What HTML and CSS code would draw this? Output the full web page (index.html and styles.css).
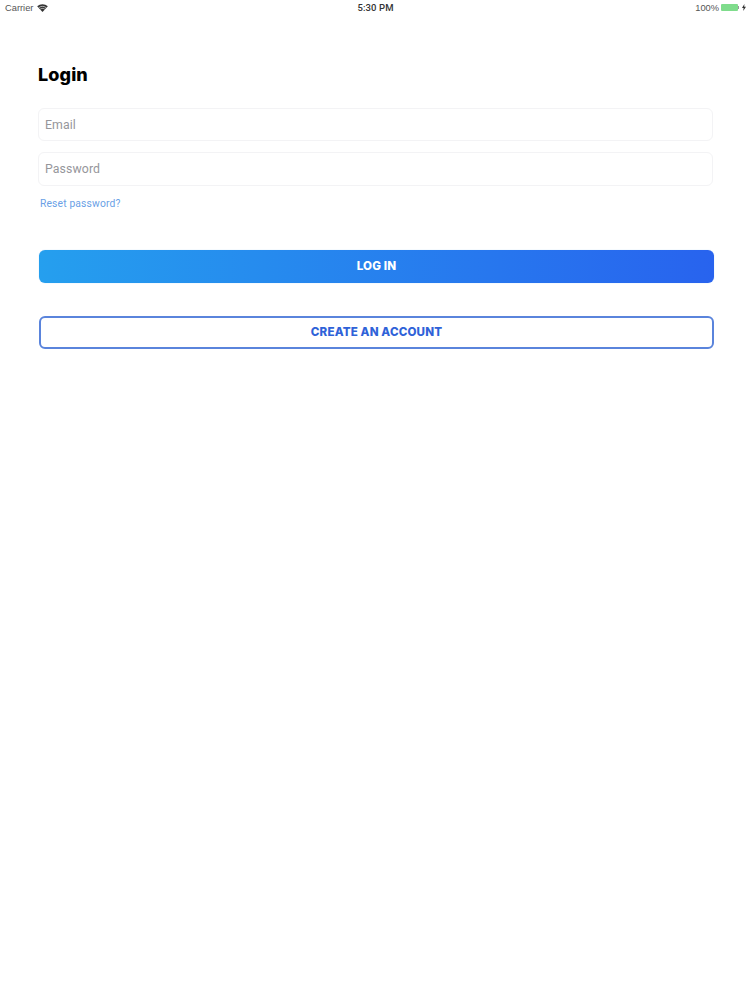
FILE: index.html
```html
<!DOCTYPE html>
<html lang="en">
<head>
<meta charset="utf-8">
<title>Login</title>
<link rel="stylesheet" href="styles.css">
</head>
<body>
<header class="status">
  <div class="status-left">
    <span>Carrier</span>
    <svg class="wifi" width="11" height="8" viewBox="0 0 12 9"><path d="M6 9 L0 2.6 C3.4 -0.6 8.6 -0.6 12 2.6 Z" fill="#333"/><path d="M1.9 4.1 C4.3 2.2 7.7 2.2 10.1 4.1" stroke="#fff" stroke-width=".7" fill="none"/><path d="M3.4 5.8 C5 4.7 7 4.7 8.6 5.8" stroke="#fff" stroke-width=".7" fill="none"/></svg>
  </div>
  <div class="status-time">5:30 PM</div>
  <div class="status-right">
    <span>100%</span>
    <span class="battery"><span class="battery-fill"></span></span>
    <span class="battery-tip"></span>
    <svg class="bolt" width="4" height="7" viewBox="0 0 4 7"><path d="M2.4 0 L0 4 H1.6 L1.2 7 L4 2.8 H2.2 Z" fill="#333"/></svg>
  </div>
</header>
<main class="content">
  <h1 class="title">Login</h1>
  <div class="fields">
    <div class="field field-email">Email</div>
    <div class="field field-password">Password</div>
  </div>
  <a class="reset" href="#">Reset password?</a>
  <div class="actions">
    <button class="btn btn-primary" type="button">LOG IN</button>
    <button class="btn btn-outline" type="button">CREATE AN ACCOUNT</button>
  </div>
</main>
</body>
</html>
```
FILE: styles.css
```css
* { box-sizing: border-box; }
html, body { margin: 0; padding: 0; background: #fff; }
body { width: 750px; height: 1000px; overflow: hidden; font-family: "Liberation Sans", Arial, sans-serif; }

.status { height: 15px; display: grid; grid-template-columns: 1fr auto 1fr; align-items: center; padding: 0 4px 0 5px; font-size: 9.3px; color: #555; }
.status-left { display: flex; align-items: center; gap: 4px; }
.status-time { font: 500 9.5px Roboto, sans-serif; color: #333; letter-spacing: .1px; }
.status-right { display: flex; align-items: center; justify-content: flex-end; }
.status-right > span:first-child { margin-right: 2px; }
.battery { width: 17px; height: 7px; background: #fff; border-radius: 1px; display: block; }
.battery-fill { display: block; width: 100%; height: 100%; background: #7fdc8c; border-radius: 1px; }
.battery-tip { width: 1px; height: 3px; background: #999; margin-right: 3px; }
.bolt { display: block; }

.content { padding: 0 36px 0 38px; }
.title { margin: 0; padding-top: 49px; font: 800 18px/22px Inter, sans-serif; color: #000; letter-spacing: .1px; }
.fields { display: flex; flex-direction: column; gap: 11px; margin-top: 22px; padding-right: 1px; }
.field { height: 33px; border: 1px solid #f3f3f5; border-radius: 6px; padding: 1px 6px 0; display: flex; align-items: center; font: 400 12.3px/1 Roboto, sans-serif; color: #96969b; letter-spacing: .1px; }
.field-password { height: 34px; }
.reset { display: block; margin: 11px 0 0 2px; font: 400 10.3px/14px Roboto, sans-serif; color: #6a9fe6; text-decoration: none; letter-spacing: .15px; }
.actions { display: flex; flex-direction: column; gap: 33px; margin: 39px 0 0 1px; }
.btn { height: 33px; border-radius: 6px; font: 800 11.6px/1 Inter, sans-serif; letter-spacing: .15px; display: block; width: 100%; }
.btn-primary { color: #fff; border: 0; padding: 0; background: linear-gradient(90deg, #259fee 0%, #2863ee 100%); box-shadow: 0 0 1px #9cc5f5; }
.btn-outline { color: #2f62d8; background: #fff; border: 2px solid #5a84dc; padding: 1px 0 0; }
```
